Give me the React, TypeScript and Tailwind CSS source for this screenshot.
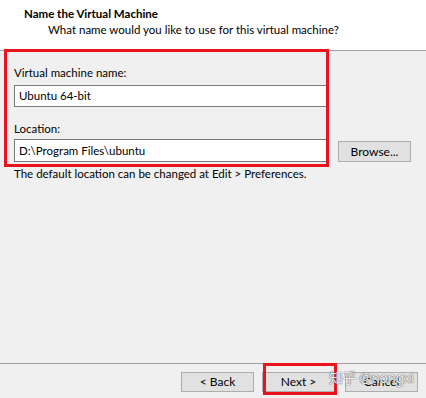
import React from "react";

function Btn({ label, className = "" }: { label: string; className?: string }) {
  return (
    <div
      className={`flex h-[20px] w-[73px] items-center justify-center border border-[#adadad] bg-[#e1e1e1] text-[12px] text-black ${className}`}
    >
      {label}
    </div>
  );
}

export default function App() {
  return (
    <div
      className="relative flex h-[398px] w-[426px] flex-col overflow-hidden bg-[#f0f0f0] text-[11.5px] text-black"
      style={{ fontFamily: 'Lato, "Noto Sans", sans-serif' }}
    >
      {/* header */}
      <div className="h-[51px] border-b border-[#a0a0a0] bg-white">
        <div className="pl-[24px] pt-[6px] font-bold leading-[16px]">Name the Virtual Machine</div>
        <div className="pl-[48px] leading-[16px]">What name would you like to use for this virtual machine?</div>
      </div>

      {/* body */}
      <div className="relative flex flex-1 flex-col px-[14px]">
        <div className="mt-[14px] leading-[16px]">Virtual machine name:</div>
        <div className="mt-[4px] flex h-[22px] w-[313px] items-center border border-[#7a7a7a] bg-white pl-[4px]">
          Ubuntu 64-bit
        </div>
        <div className="mt-[14px] leading-[16px]">Location:</div>
        <div className="mt-[2px] flex items-end">
          <div className="flex h-[23px] w-[313px] items-center border border-[#7a7a7a] bg-white pl-[4px]">
            D:\Program Files\ubuntu
          </div>
          <Btn label="Browse..." className="ml-[11px] h-[21px] w-[71px]" />
        </div>
        <div className="mt-[4px] leading-[16px]">The default location can be changed at Edit &gt; Preferences.</div>

        {/* annotation */}
        <div className="pointer-events-none absolute left-[4px] top-[-2px] h-[118px] w-[325px] border-[3px] border-[#e8131c]" />
      </div>

      {/* footer */}
      <div className="relative h-[35px] border-t border-[#a0a0a0]">
        <div className="flex items-center justify-end pr-[8px] pt-[8px]">
          <Btn label="< Back" />
          <Btn label="Next >" className="ml-[8px] w-[72px]" />
          <Btn label="Cancel" className="ml-[10px] w-[72px]" />
        </div>
        <div className="pointer-events-none absolute left-[263px] top-[-1px] h-[32px] w-[74px] border-[3px] border-[#e8131c]" />
        <div
          className="pointer-events-none absolute left-[329px] top-[3px] whitespace-nowrap text-[14px] tracking-[-0.5px] text-white/90"
          style={{
            fontFamily: '"Noto Sans", "Noto Sans CJK SC", sans-serif',
            textShadow: "0 0 1px #555, 0 0 1px #555",
          }}
        >
          知乎 @nongxi
        </div>
      </div>
    </div>
  );
}
